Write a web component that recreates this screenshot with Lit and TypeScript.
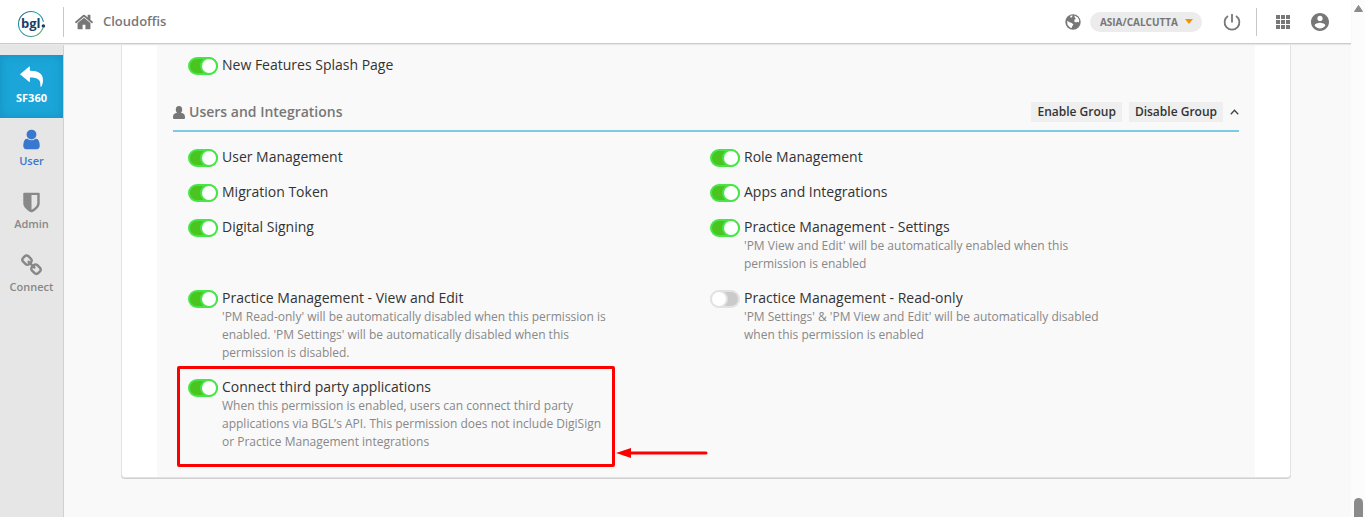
import { LitElement, html, svg, css, nothing } from "lit";
import { customElement, property } from "lit/decorators.js";

const HOME = "M1472 992v480q0 26-19 45t-45 19h-384v-384h-256v384h-384q-26 0-45-19t-19-45v-480q0-1 .5-3t.5-3l575-474 575 474q1 2 1 6zm223-69l-62 74q-8 9-21 11h-3q-13 0-21-7l-692-577-692 577q-12 8-24 7-13-2-21-11l-62-74q-8-10-7-23.5t11-21.5l719-599q32-26 76-26t76 26l244 204v-195q0-14 9-23t23-9h192q14 0 23 9t9 23v408l219 182q10 8 11 21.5t-7 23.5z";
const USER = "M1536 1399q0 109-62.5 187t-150.5 78h-854q-88 0-150.5-78t-62.5-187q0-85 8.5-160.5t31.5-152 58.5-131 94-89 134.5-34.5q131 128 313 128t313-128q76 0 134.5 34.5t94 89 58.5 131 31.5 152 8.5 160.5zm-256-887q0 159-112.5 271.5t-271.5 112.5-271.5-112.5-112.5-271.5 112.5-271.5 271.5-112.5 271.5 112.5 112.5 271.5z";
const SHIELD = "M1344 960v-640h-448v1137q119-63 213-137 235-184 235-360zm192-768v768q0 86-33.5 170.5t-83 150-118 127.5-126.5 103-121 77.5-89.5 49.5-42.5 20q-12 6-26 6t-26-6q-16-7-42.5-20t-89.5-49.5-121-77.5-126.5-103-118-127.5-83-150-33.5-170.5v-768q0-26 19-45t45-19h1152q26 0 45 19t19 45z";
const CHAIN = "M1520 1216q0-40-28-68l-208-208q-28-28-68-28-42 0-72 32 3 3 19 18.5t21.5 21.5 15 19 13 25.5 3.5 27.5q0 40-28 68t-68 28q-15 0-27.5-3.5t-25.5-13-19-15-21.5-21.5-18.5-19q-33 31-33 73 0 40 28 68l206 207q27 27 68 27 40 0 68-26l147-146q28-28 28-67zm-703-705q0-40-28-68l-206-207q-28-28-68-28-39 0-68 27l-147 146q-28 28-28 67 0 40 28 68l208 208q27 27 68 27 42 0 72-31-3-3-19-18.5t-21.5-21.5-15-19-13-25.5-3.5-27.5q0-40 28-68t68-28q15 0 27.5 3.5t25.5 13 19 15 21.5 21.5 18.5 19q33-31 33-73zm895 705q0 120-85 203l-147 146q-83 83-203 83-121 0-204-85l-206-207q-83-83-83-203 0-123 88-209l-88-88q-86 88-208 88-120 0-204-84l-208-208q-84-84-84-204t85-203l147-146q83-83 203-83 121 0 204 85l206 207q83 83 83 203 0 123-88 209l88 88q86-88 208-88 120 0 204 84l208 208q84 84 84 204z";
const REPLY = "M0 720L700 130Q770 80 770 170V450C1400 440 1792 640 1792 1180C1792 1380 1740 1540 1670 1680Q1620 1730 1590 1650C1610 1160 1420 980 770 980V1270Q770 1360 700 1310Z";

const glyph = (d: string, size: number) =>
  html`<svg width=${size} height=${size} viewBox="0 0 1792 1792" fill="currentColor" aria-hidden="true">${svg`<path d=${d}></path>`}</svg>`;

interface Permission {
  id: string;
  label: string;
  note?: string;
  on: boolean;
  marked?: boolean;
}

const PERMISSIONS: Permission[] = [
  { id: "user-management", label: "User Management", on: true },
  { id: "role-management", label: "Role Management", on: true },
  { id: "migration-token", label: "Migration Token", on: true },
  { id: "apps", label: "Apps and Integrations", on: true },
  { id: "digital-signing", label: "Digital Signing", on: true },
  { id: "pm-settings", label: "Practice Management - Settings", on: true,
    note: "'PM View and Edit' will be automatically enabled when this permission is enabled" },
  { id: "pm-edit", label: "Practice Management - View and Edit", on: true,
    note: "'PM Read-only' will be automatically disabled when this permission is enabled. 'PM Settings' will be automatically disabled when this permission is disabled." },
  { id: "pm-read", label: "Practice Management - Read-only", on: false,
    note: "'PM Settings' & 'PM View and Edit' will be automatically disabled when this permission is enabled" },
  { id: "connect-apps", label: "Connect third party applications", on: true, marked: true,
    note: "When this permission is enabled, users can connect third party applications via BGL’s API. This permission does not include DigiSign or Practice Management integrations" },
];

@customElement("permission-item")
export class PermissionItem extends LitElement {
  @property({ attribute: false }) item!: Permission;

  static styles = css`
    :host { display: block; }
    .item { display: flex; align-items: flex-start; gap: 4px; position: relative; }
    .toggle {
      appearance: none; flex: none; box-sizing: border-box;
      width: 30px; height: 18px; margin: 1px 0 0; padding: 0;
      border: 2px solid #48e548; border-radius: 9px; background: #4ac41f;
      display: flex; justify-content: flex-end; cursor: pointer;
    }
    .toggle::before {
      content: ""; width: 14px; height: 14px; border-radius: 50%;
      background: #fff; box-shadow: 0 0 0 2px #48e548;
    }
    .toggle:not(:checked) { border-color: #e2e2e2; background: #cacaca; justify-content: flex-start; }
    .toggle:not(:checked)::before { box-shadow: 0 0 0 2px #e2e2e2; }
    .body { display: grid; gap: 1px; max-width: 388px; }
    .label { font-size: 14px; line-height: 18px; color: #333; }
    .note { margin: 0; font-size: 12px; line-height: 18px; color: #888; }
    .frame {
      position: absolute; inset: -12px auto -16px -11px; width: 432px;
      border: 3px solid #fe0000; border-radius: 2px; pointer-events: none;
    }
    .arrow { position: absolute; left: 428px; top: 70px; }
  `;

  render() {
    const { id, label, note, on, marked } = this.item;
    return html`
      <div class="item">
        <input class="toggle" type="checkbox" role="switch" id=${id} .checked=${on} />
        <div class="body">
          <label class="label" for=${id}>${label}</label>
          ${note ? html`<p class="note">${note}</p>` : nothing}
        </div>
        ${marked
          ? html`<div class="frame"></div>
              <svg class="arrow" width="92" height="10" viewBox="0 0 92 10" aria-hidden="true">
                <path d="M0 5L15 0V10Z" fill="#fe0000" />
                <path d="M13 5H90" stroke="#fe0000" stroke-width="3" stroke-linecap="round" />
              </svg>`
          : nothing}
      </div>
    `;
  }
}

@customElement("app-root")
export class AppRoot extends LitElement {
  static styles = css`
    :host {
      display: grid; grid-template-columns: minmax(0, 1fr) 14px; height: 100vh; overflow: hidden;
      font-family: "Open Sans", "Noto Sans", sans-serif; color: #333; background: #f9f9f9;
    }
    svg { display: block; flex: none; }
    a { color: inherit; text-decoration: none; }
    button { font-family: inherit; border: 0; padding: 0; background: none; color: inherit; cursor: pointer; }
    .app { display: grid; grid-template-rows: 44px minmax(0, 1fr); min-height: 0; }
    .top {
      display: flex; align-items: center; justify-content: space-between; box-sizing: border-box;
      background: #fff; border-bottom: 1px solid #cbcbcb; color: #777;
      box-shadow: 0 1px 1px #e8e8e8; z-index: 1;
    }
    .brand, .tools { display: flex; align-items: center; }
    .logo { box-sizing: border-box; width: 63px; padding: 4px 0 0 17px; }
    .divider { width: 1px; height: 30px; background: #c8c8c8; }
    .home { display: flex; align-items: center; gap: 9px; padding-left: 10px; font-size: 13px; line-height: 18px; font-weight: 600; }
    .home span { padding-bottom: 1px; }
    .tools { padding-right: 22px; }
    .zone {
      display: flex; align-items: center; gap: 7px; height: 20px; margin: 0 21px 0 9px; padding: 0 9px 0 10px;
      border-radius: 10px; background: #ececec; font-size: 10px; font-weight: 700;
    }
    .tools .divider { height: 28px; margin: 0 18px 0 15px; }
    .apps { margin-right: 20px; }
    .work { display: grid; grid-template-columns: 64px minmax(0, 1fr); min-height: 0; }
    .side { background: #e6e6e6; border-right: 1px solid #d0d0d0; padding-top: 11px; }
    .nav {
      display: flex; flex-direction: column; align-items: center; gap: 1px; box-sizing: border-box;
      height: 63px; padding-top: 10px; color: #888; font-size: 11px; line-height: 18px; font-weight: 600;
    }
    .back { background: #1ba5d8; color: #fff; font-weight: 700; box-shadow: inset 0 0 10px #168fbd; }
    .current { color: #3878cf; }
    .page { padding: 0 60px 0 57px; overflow: hidden; }
    .card {
      background: #fff; border: solid #e2e2e2; border-width: 0 1px 1px; border-radius: 0 0 4px 4px;
      box-shadow: 0 1px 0 #d0d0d0; padding: 0 35px;
    }
    .panel { background: #f9f9f9; padding: 12px 16px 26px; }
    .lead { padding-left: 15px; }
    .group {
      display: flex; align-items: center; justify-content: space-between; margin-top: 27px;
      padding-bottom: 8px; border-bottom: 2px solid #7ccbe6;
    }
    .title { display: flex; align-items: center; gap: 4px; margin: 0; font-size: 14px; line-height: 20px; font-weight: 600; color: #777; }
    .actions { display: flex; align-items: center; gap: 7px; }
    .action { height: 20px; padding: 0 6px; background: #efefef; font-size: 12px; line-height: 20px; font-weight: 600; color: #333; }
    .grid { display: grid; grid-template-columns: 1fr 1fr; row-gap: 16px; padding: 16px 7px 0 15px; }
    .scroll { display: flex; flex-direction: column; justify-content: space-between; align-items: center; background: #fcfcfc; padding-top: 5px; }
    .thumb { width: 9px; height: 19px; border-radius: 5px 5px 0 0; background: #8b8b8b; }
  `;

  render() {
    return html`
      <div class="app">
        <header class="top">
          <div class="brand">
            <a class="logo" href="#" aria-label="bgl">
              <svg width="29" height="28" viewBox="0 0 29 28">
                <defs>
                  <linearGradient id="ring" x1="0" y1="0" x2="1" y2="1">
                    <stop offset="0" stop-color="#1d4c73" />
                    <stop offset=".4" stop-color="#2bb1ae" />
                    <stop offset=".65" stop-color="#2c86b0" />
                    <stop offset="1" stop-color="#84b43f" />
                  </linearGradient>
                </defs>
                <circle cx="14" cy="14" r="12.5" fill="none" stroke="url(#ring)" stroke-width="1.1" />
                <path d="M24 12h5v6h-5z" fill="#fff" />
                <text x="4" y="18" font-size="13" font-weight="700" fill="#173f66" font-family="Open Sans">bgl</text>
                <circle cx="26.400" cy="16" r="1.800" fill="#173f66" />
              </svg>
            </a>
            <div class="divider"></div>
            <a class="home" href="#">${glyph(HOME, 20)}<span>Cloudoffis</span></a>
          </div>
          <div class="tools">
            <svg width="16" height="16" viewBox="0 0 16 16" aria-hidden="true">
              <circle cx="8" cy="8" r="7.7" fill="#777" />
              <path d="M2.200 6.800L4.600 8.200 6.800 9 8.400 10.600 7.200 12.200 6.600 14.200 4.400 13 2.400 10.400ZM5.200 1.800L7.600 1.400 7 3.200 5.600 3.800ZM9.200 1.600L12.600 3.200 14.200 6 14 8.400 12.600 7.800 11 8.600 9.200 7.400 9.400 5.800 10.800 5 9.800 3.600Z" fill="#fff" />
            </svg>
            <button class="zone">ASIA/CALCUTTA
              <svg width="8" height="5" viewBox="0 0 8 5"><path d="M0 0H8L4 5Z" fill="#f39200" /></svg>
            </button>
            <button aria-label="Sign out">
              <svg width="18" height="18" viewBox="0 0 18 18" fill="none" stroke="#777" stroke-width="1.8">
                <path d="M9 1V9.5M5 3A7.4 7.4 0 1 0 13 3" />
              </svg>
            </button>
            <div class="divider"></div>
            <button class="apps" aria-label="Apps">
              <svg width="16" height="16" viewBox="0 0 16 16" fill="#777">
                ${[1, 6, 11].map((y) => [1, 6, 11].map((x) => svg`<rect x=${x} y=${y} width="4" height="4"></rect>`))}
              </svg>
            </button>
            <button aria-label="Account">
              <svg width="18" height="18" viewBox="2 2 20 20" fill="#777">
                <path d="M12 2C6.48 2 2 6.48 2 12s4.48 10 10 10 10-4.48 10-10S17.52 2 12 2zm0 3c1.66 0 3 1.34 3 3s-1.34 3-3 3-3-1.34-3-3 1.34-3 3-3zm0 14.2c-2.5 0-4.71-1.28-6-3.22.03-1.99 4-3.08 6-3.08 1.99 0 5.97 1.09 6 3.08-1.29 1.94-3.5 3.22-6 3.22z" />
              </svg>
            </button>
          </div>
        </header>
        <div class="work">
          <nav class="side">
            <a class="nav back" href="#">${glyph(REPLY, 23)}SF360</a>
            <a class="nav current" href="#">${glyph(USER, 23)}User</a>
            <a class="nav" href="#">${glyph(SHIELD, 23)}Admin</a>
            <a class="nav" href="#">${glyph(CHAIN, 23)}Connect</a>
          </nav>
          <main class="page">
            <div class="card">
              <div class="panel">
                <permission-item class="lead" .item=${{ id: "splash", label: "New Features Splash Page", on: true }}></permission-item>
                <div class="group">
                  <h2 class="title">
                    <svg width="12" height="13" viewBox="0 0 12 13" fill="#777" aria-hidden="true">
                      <path d="M6 0C8.200 0 9.200 1.500 9.200 3.400 9.200 4.900 8.700 6 7.900 6.800 10.500 7.200 12 8.500 12 11V12Q12 13 11 13H1Q0 13 0 12V11C0 8.500 1.500 7.200 4.100 6.800 3.300 6 2.800 4.900 2.800 3.400 2.800 1.500 3.800 0 6 0Z" />
                    </svg>
                    Users and Integrations
                  </h2>
                  <div class="actions">
                    <button class="action">Enable Group</button>
                    <button class="action">Disable Group</button>
                    <button aria-label="Collapse group">
                      <svg width="9" height="6" viewBox="0 0 9 6" fill="none" stroke="#444" stroke-width="1.300"><path d="M.8 5.200L4.500 1.200 8.200 5.200" /></svg>
                    </button>
                  </div>
                </div>
                <div class="grid">
                  ${PERMISSIONS.map((p) => html`<permission-item .item=${p}></permission-item>`)}
                </div>
              </div>
            </div>
          </main>
        </div>
      </div>
      <div class="scroll" aria-hidden="true">
        <svg width="9" height="7" viewBox="0 0 9 7"><path d="M4.500 .5L8.500 6.500H.5Z" fill="#8b8b8b" stroke="#8b8b8b" stroke-linejoin="round" /></svg>
        <div class="thumb"></div>
      </div>
    `;
  }
}
